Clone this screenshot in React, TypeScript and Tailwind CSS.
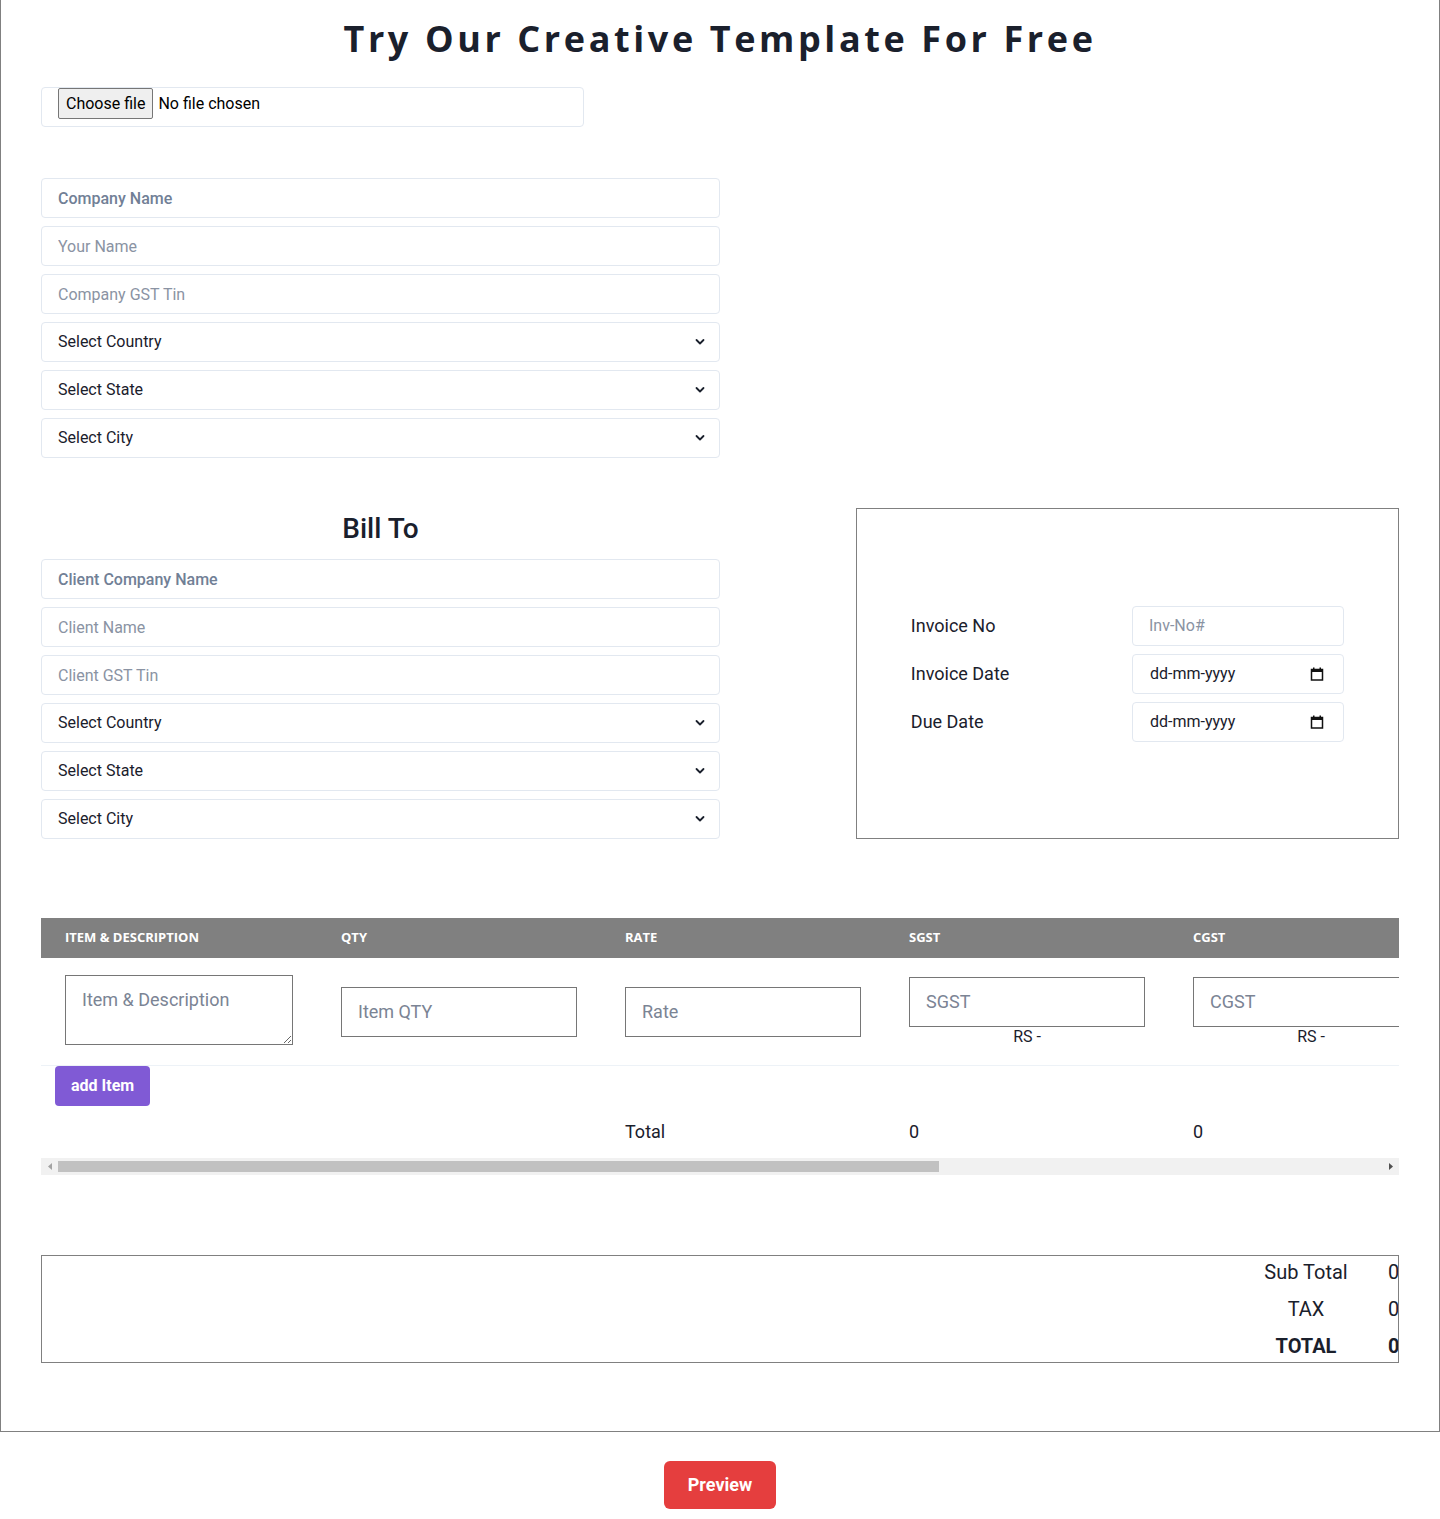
import React from "react";

const fieldBase =
  "w-full h-10 bg-white border border-[#e2e8f0] rounded text-base text-[#1a202c] outline-none";

function TextField({ placeholder, strong }: { placeholder: string; strong?: boolean }) {
  return (
    <input
      type="text"
      placeholder={placeholder}
      className={`${fieldBase} px-4 ${
        strong ? "font-medium placeholder:text-[#718096]" : "placeholder:text-[#8a93a3]"
      }`}
    />
  );
}

function SelectField({ label }: { label: string }) {
  return (
    <div className="relative">
      <select className={`${fieldBase} appearance-none pl-4 pr-8`} defaultValue="">
        <option value="">{label}</option>
      </select>
      <svg
        className="absolute right-[15px] top-1/2 -translate-y-1/2 pointer-events-none"
        width="10"
        height="7"
        viewBox="0 0 10 7"
        fill="none"
      >
        <path d="M1.5 1.5 5 5l3.5-3.5" stroke="#1a202c" strokeWidth="1.8" strokeLinecap="round" strokeLinejoin="round" />
      </svg>
    </div>
  );
}

function CalendarIcon() {
  return (
    <svg width="14" height="14" viewBox="0 0 14 14" fill="none">
      <rect x="1.5" y="2.5" width="11" height="10.5" stroke="#111" strokeWidth="1.5" />
      <rect x="1" y="2" width="12" height="3" fill="#111" />
      <rect x="3" y="0.5" width="1.5" height="2" fill="#111" />
      <rect x="9.5" y="0.5" width="1.5" height="2" fill="#111" />
    </svg>
  );
}

function DateField() {
  return (
    <div className="w-[212px] h-10 pl-[17px] pr-[19px] flex items-center justify-between border border-[#e2e8f0] rounded bg-white text-base text-[#1a202c]">
      <span>dd-mm-yyyy</span>
      <CalendarIcon />
    </div>
  );
}

// static look of the horizontal scrollbar under the items table
function ScrollBar() {
  return (
    <div className="h-[17px] bg-[#f1f1f1] flex items-center">
      <div className="w-[17px] h-full flex items-center justify-center">
        <svg width="4" height="7" viewBox="0 0 4 7">
          <path d="M4 0v7L0 3.5z" fill="#a3a3a3" />
        </svg>
      </div>
      <div className="w-[881px] h-[11px] bg-[#c1c1c1]" />
      <div className="flex-1" />
      <div className="w-[17px] h-full flex items-center justify-center">
        <svg width="4" height="7" viewBox="0 0 4 7">
          <path d="M0 0v7l4-3.5z" fill="#505050" />
        </svg>
      </div>
    </div>
  );
}

const cellInput =
  "w-full h-[50px] px-4 border border-[#767676] bg-white text-lg outline-none placeholder:text-[#7b8494]";

export default function App() {
  const cols = ["ITEM & DESCRIPTION", "QTY", "RATE", "SGST", "CGST", "IGST", "AMOUNT"];

  return (
    <div className="bg-white text-[#1a202c] font-['Roboto','Liberation_Sans',sans-serif]">
      <div className="border-x border-b border-[#808080] px-10 pt-4 pb-[68px]">
        <h1 className="text-center text-[36px] leading-[46px] font-bold tracking-[0.1em] font-['Open_Sans','Liberation_Sans',sans-serif]">
          Try Our Creative Template For Free
        </h1>

        {/* logo upload */}
        <div className="mt-[25px] w-2/5 h-10 pl-4 flex items-start border border-[#e2e8f0] rounded">
          <button className="h-[31px] px-[7px] border border-[#767676] bg-[#efefef] rounded-[2px] text-base text-black">
            Choose file
          </button>
          <span className="ml-[5px] mt-1 text-base text-black">No file chosen</span>
        </div>

        {/* company details */}
        <div className="mt-[51px] w-1/2 flex flex-col gap-2">
          <TextField placeholder="Company Name" strong />
          <TextField placeholder="Your Name" />
          <TextField placeholder="Company GST Tin" />
          <SelectField label="Select Country" />
          <SelectField label="Select State" />
          <SelectField label="Select City" />
        </div>

        {/* bill to + invoice info */}
        <div className="mt-[50px] flex justify-between">
          <div className="w-1/2">
            <h2 className="text-center text-[28px] leading-[42px] font-medium mb-[9px]">Bill To</h2>
            <div className="flex flex-col gap-2">
              <TextField placeholder="Client Company Name" strong />
              <TextField placeholder="Client Name" />
              <TextField placeholder="Client GST Tin" />
              <SelectField label="Select Country" />
              <SelectField label="Select State" />
              <SelectField label="Select City" />
            </div>
          </div>

          <div className="w-2/5 border border-[#808080] px-[54px] flex flex-col justify-center gap-2">
            <div className="flex items-center justify-between">
              <span className="text-lg">Invoice No</span>
              <input
                type="text"
                placeholder="Inv-No#"
                className="w-[212px] h-10 px-4 border border-[#e2e8f0] rounded text-base outline-none placeholder:text-[#8a93a3]"
              />
            </div>
            <div className="flex items-center justify-between">
              <span className="text-lg">Invoice Date</span>
              <DateField />
            </div>
            <div className="flex items-center justify-between">
              <span className="text-lg">Due Date</span>
              <DateField />
            </div>
          </div>
        </div>

        {/* items table */}
        <div className="mt-[79px]">
          <div className="overflow-hidden">
            <table className="table-fixed border-collapse w-[2040px]">
              <colgroup>
                <col className="w-[276px]" />
                <col className="w-[284px]" />
                <col className="w-[284px]" />
                <col className="w-[284px]" />
                <col className="w-[284px]" />
                <col className="w-[284px]" />
                <col className="w-[344px]" />
              </colgroup>
              <thead className="bg-[#808080] text-white">
                <tr>
                  {cols.map((c) => (
                    <th
                      key={c}
                      className="h-10 px-6 text-left text-[13px] font-bold font-['Open_Sans','Liberation_Sans',sans-serif]"
                    >
                      {c}
                    </th>
                  ))}
                </tr>
              </thead>
              <tbody>
                <tr className="border-b border-[#edf2f7]">
                  <td className="px-6 pt-[17px] pb-5 align-middle">
                    <textarea
                      placeholder="Item & Description"
                      className="block w-full h-[70px] px-4 py-[10px] border border-[#767676] text-lg outline-none placeholder:text-[#7b8494]"
                    />
                  </td>
                  <td className="px-6 align-middle">
                    <input type="text" placeholder="Item QTY" className={cellInput} />
                  </td>
                  <td className="px-6 align-middle">
                    <input type="text" placeholder="Rate" className={cellInput} />
                  </td>
                  <td className="px-6 align-middle">
                    <input type="text" placeholder="SGST" className={cellInput} />
                    <div className="text-center text-base leading-5">RS -</div>
                  </td>
                  <td className="px-6 align-middle">
                    <input type="text" placeholder="CGST" className={cellInput} />
                    <div className="text-center text-base leading-5">RS -</div>
                  </td>
                  <td className="px-6 align-middle">
                    <input type="text" placeholder="IGST" className={cellInput} />
                    <div className="text-center text-base leading-5">RS -</div>
                  </td>
                  <td className="px-6 align-middle text-lg">0</td>
                </tr>
                <tr>
                  <td className="pl-[14px]" colSpan={7}>
                    <button className="h-10 px-4 bg-[#805ad5] text-white font-bold text-base rounded">
                      add Item
                    </button>
                  </td>
                </tr>
                <tr>
                  <td />
                  <td />
                  <td className="px-6 pt-[14px] pb-[14px] text-lg leading-6">Total</td>
                  <td className="px-6 pt-[14px] pb-[14px] text-lg leading-6">0</td>
                  <td className="px-6 pt-[14px] pb-[14px] text-lg leading-6">0</td>
                  <td className="px-6 pt-[14px] pb-[14px] text-lg leading-6">0</td>
                  <td />
                </tr>
              </tbody>
            </table>
          </div>
          <ScrollBar />
        </div>

        {/* summary */}
        <div className="mt-20 border border-[#808080] overflow-hidden flex flex-col items-end gap-[5px] text-xl">
          <div className="h-8 flex items-center">
            <span className="w-[100px] text-center">Sub Total</span>
            <span className="ml-8 w-[10px] overflow-hidden">0</span>
          </div>
          <div className="h-8 flex items-center">
            <span className="w-[100px] text-center">TAX</span>
            <span className="ml-8 w-[10px] overflow-hidden">0</span>
          </div>
          <div className="h-8 flex items-center font-bold">
            <span className="w-[100px] text-center">TOTAL</span>
            <span className="ml-8 w-[10px] overflow-hidden">0</span>
          </div>
        </div>
      </div>

      <div className="flex justify-center pt-[29px] pb-[11px]">
        <button className="px-6 py-3 bg-[#e53e3e] text-white text-lg leading-6 font-bold rounded-md">
          Preview
        </button>
      </div>
    </div>
  );
}
